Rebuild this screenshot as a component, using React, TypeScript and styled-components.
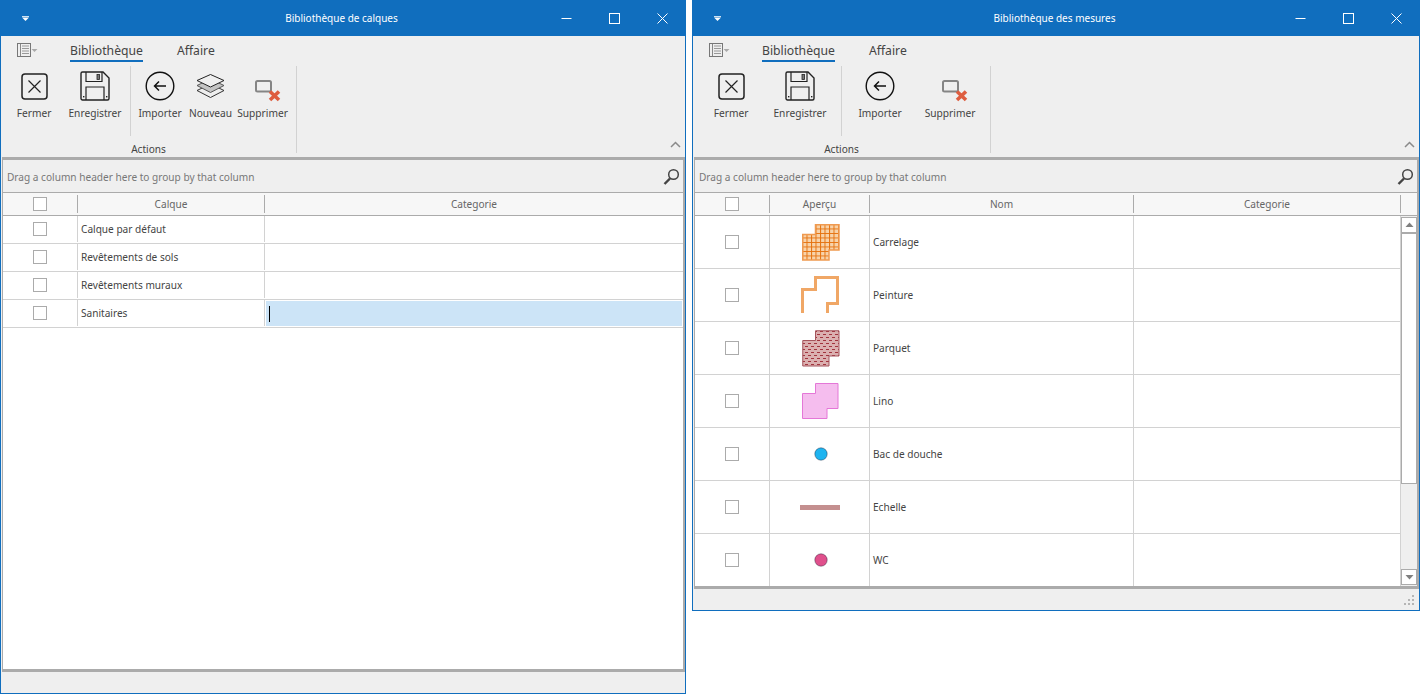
import React from 'react';
import styled, { createGlobalStyle } from 'styled-components';

const GlobalStyle = createGlobalStyle`
  html, body {
    margin: 0;
    padding: 0;
    background: #ffffff;
  }
  body {
    font-family: "Noto Sans", "Liberation Sans", sans-serif;
    font-size: 10.1px;
    color: #444444;
  }
`;

const Desktop = styled.div`
  display: flex;
  align-items: flex-start;
  gap: 6px;
  width: 1420px;
  height: 694px;
  overflow: hidden;
`;

const Window = styled.div<{ $width: number; $height: number }>`
  width: ${p => p.$width}px;
  height: ${p => p.$height}px;
  box-sizing: border-box;
  border: 1px solid #106ebe;
  border-top: 0;
  background: #efefef;
  display: flex;
  flex-direction: column;
  flex: none;
`;

const TitleBar = styled.div`
  height: 36px;
  flex: none;
  background: #106ebe;
  color: #ffffff;
  display: grid;
  grid-template-columns: 143px 1fr 146px;
  align-items: center;
`;

const TitleMenu = styled.div`
  padding-left: 21px;
  display: flex;
  align-items: center;
`;

const TitleText = styled.div`
  text-align: center;
  font-size: 10px;
`;

const TitleControls = styled.div`
  display: flex;
  justify-content: flex-end;
`;

const ControlButton = styled.div`
  width: 48px;
  height: 36px;
  box-sizing: border-box;
  padding-left: 2px;
  display: flex;
  align-items: center;
  justify-content: center;
`;

const Ribbon = styled.div`
  height: 121px;
  flex: none;
  position: relative;
`;

const TabRow = styled.div`
  height: 26px;
  display: flex;
  align-items: flex-start;
  padding-left: 16px;
`;

const AppMenu = styled.div`
  width: 53px;
  height: 22px;
  padding-top: 7px;
  box-sizing: border-box;
  display: flex;
  align-items: flex-start;
`;

const Tab = styled.div<{ $active?: boolean }>`
  height: 26px;
  box-sizing: border-box;
  margin-right: 34px;
  padding-top: 5px;
  font-size: 12.2px;
  line-height: 19px;
  color: #444444;
  border-bottom: 2px solid ${p => (p.$active ? '#106ebe' : 'transparent')};
`;

const GroupRow = styled.div`
  display: flex;
  margin-top: 4px;
  height: 87px;
`;

const Group = styled.div`
  display: flex;
  flex-direction: column;
  border-right: 1px solid #d2d2d2;
`;

const GroupBody = styled.div`
  display: flex;
  height: 70px;
`;

const GroupLabel = styled.div`
  height: 17px;
  line-height: 27px;
  text-align: center;
  font-size: 10.1px;
  color: #444444;
`;

const Section = styled.div<{ $pad: number; $line?: boolean }>`
  display: flex;
  padding-right: ${p => p.$pad}px;
  border-right: ${p => (p.$line ? '1px solid #d2d2d2' : '0')};
`;

const RibbonButton = styled.div<{ $width: number }>`
  width: ${p => p.$width}px;
  display: flex;
  flex-direction: column;
  align-items: center;
  padding-top: 4px;
`;

const IconSlot = styled.div`
  height: 32px;
  width: 32px;
  display: flex;
  align-items: center;
  justify-content: center;
`;

const ButtonLabel = styled.div`
  margin-top: 3px;
  font-size: 10.2px;
  line-height: 16px;
  white-space: nowrap;
  color: #444444;
`;

const Collapse = styled.div`
  position: absolute;
  right: 4px;
  bottom: 9px;
  line-height: 0;
`;

const Frame = styled.div`
  flex: 1;
  min-height: 0;
  margin-left: 1px;
  border-style: solid;
  border-color: #ababab;
  border-width: 3px 2px 3px 1px;
  display: flex;
  flex-direction: column;
`;

const GroupBar = styled.div`
  height: 33px;
  flex: none;
  box-sizing: border-box;
  border-bottom: 1px solid #ababab;
  padding: 0 3px 0 4px;
  display: flex;
  align-items: center;
  justify-content: space-between;
  color: #777777;
  font-size: 10.1px;
`;

const GroupHint = styled.span`
  padding-top: 2px;
`;

const HeaderRow = styled.div<{ $columns: string }>`
  height: 23px;
  flex: none;
  box-sizing: border-box;
  background: #f7f7f7;
  border-bottom: 1px solid #ababab;
  display: grid;
  grid-template-columns: ${p => p.$columns};
  align-items: center;
`;

const HeaderCell = styled.div<{ $line?: boolean }>`
  height: 18px;
  line-height: 18px;
  box-sizing: border-box;
  display: flex;
  align-items: center;
  justify-content: center;
  color: #666666;
  font-size: 10.1px;
  border-right: ${p => (p.$line ? '1px solid #ababab' : '0')};
`;

const GridBody = styled.div`
  flex: 1;
  min-height: 0;
  display: flex;
  background: #ffffff;
`;

const Rows = styled.div`
  flex: 1;
  min-width: 0;
  overflow: hidden;
`;

const Row = styled.div<{ $columns: string; $height: number; $compact?: boolean }>`
  height: ${p => p.$height}px;
  box-sizing: border-box;
  border-bottom: 1px solid #d2d2d2;
  padding-bottom: ${p => (p.$compact ? 1 : 0)}px;
  display: grid;
  grid-template-columns: ${p => p.$columns};
`;

const Cell = styled.div<{ $line?: boolean; $center?: boolean }>`
  box-sizing: border-box;
  display: flex;
  align-items: center;
  justify-content: ${p => (p.$center ? 'center' : 'flex-start')};
  padding-left: ${p => (p.$center ? 0 : 3)}px;
  font-size: 10.1px;
  color: #444444;
  border-right: ${p => (p.$line ? '1px solid #d2d2d2' : '0')};
  min-width: 0;
`;

const SwatchCell = styled(Cell)`
  padding-left: 2px;
`;

const EditCell = styled.div`
  margin: 1px 1px 0 1px;
  padding-left: 3px;
  background: #cce4f7;
  display: flex;
  align-items: center;
`;

const Caret = styled.div`
  width: 1px;
  height: 16px;
  background: #000000;
`;

const Check = styled.div`
  width: 14px;
  height: 14px;
  box-sizing: border-box;
  border: 1px solid #ababab;
  background: #ffffff;
`;

const ScrollBar = styled.div`
  width: 16px;
  flex: none;
  background: #efefef;
  display: flex;
  flex-direction: column;
  padding: 1px 0;
  box-sizing: border-box;
`;

const ScrollButton = styled.div`
  height: 16px;
  flex: none;
  box-sizing: border-box;
  border: 1px solid #ababab;
  background: #ffffff;
  display: flex;
  align-items: center;
  justify-content: center;
`;

const ScrollThumb = styled.div`
  height: 251px;
  flex: none;
  box-sizing: border-box;
  border: 1px solid #ababab;
  background: #ffffff;
`;

const ScrollSpace = styled.div`
  flex: 1;
`;

const StatusBar = styled.div`
  height: 21px;
  flex: none;
  box-sizing: border-box;
  display: flex;
  justify-content: flex-end;
  align-items: flex-end;
  padding: 0 4px 4px 0;
`;

const IconSvg = styled.svg`
  display: block;
  flex: none;
`;

const MenuArrow = () => (
  <IconSvg width="7" height="5" viewBox="0 0 7 5">
    <rect x="0" y="0" width="7" height="1" fill="#fff" opacity="0.8" />
    <path d="M0 1.5h7L3.5 5z" fill="#fff" />
  </IconSvg>
);

const MinimizeIcon = () => (
  <IconSvg width="11" height="11" viewBox="0 0 11 11">
    <path d="M.5 5.5h10" stroke="#fff" />
  </IconSvg>
);

const MaximizeIcon = () => (
  <IconSvg width="11" height="11" viewBox="0 0 11 11">
    <rect x="0.5" y="0.5" width="10" height="10" fill="none" stroke="#fff" />
  </IconSvg>
);

const CloseIcon = () => (
  <IconSvg width="11" height="11" viewBox="0 0 11 11">
    <path d="M.5.5l10 10M10.5.5l-10 10" stroke="#fff" />
  </IconSvg>
);

const AppMenuIcon = () => (
  <IconSvg width="21" height="15" viewBox="0 0 21 15">
    <rect x="0.5" y="0.5" width="13" height="13" fill="none" stroke="#777" />
    <path d="M3.5 1v12" stroke="#888" />
    <path d="M5 3h7M5 5.5h7M5 8h7M5 10.5h7" stroke="#999" />
    <path d="M14.5 6h6l-3 3z" fill="#aaa" />
  </IconSvg>
);

const CloseDocIcon = () => (
  <IconSvg width="27" height="27" viewBox="0 0 27 27">
    <rect x="1" y="1" width="25" height="25" rx="3" fill="none" stroke="#222" strokeWidth="1.5" />
    <path d="M7.5 7.5l12 12M19.5 7.5l-12 12" stroke="#222" strokeWidth="1.2" />
  </IconSvg>
);

const SaveIcon = () => (
  <IconSvg width="30" height="30" viewBox="0 0 30 30">
    <path d="M2.5 1h20.5L29 7v20.5a1.5 1.5 0 0 1-1.5 1.5h-25A1.5 1.5 0 0 1 1 27.5v-25A1.5 1.5 0 0 1 2.5 1z" fill="none" stroke="#222" strokeWidth="1.4" />
    <path d="M6 1v9.5h16V1" fill="none" stroke="#222" strokeWidth="1.2" />
    <rect x="17" y="3.5" width="2.5" height="5" fill="#777" stroke="#222" strokeWidth="0.8" />
    <path d="M6 29V16h18v13" fill="none" stroke="#222" strokeWidth="1.2" />
    <rect x="3" y="25" width="1.4" height="1.4" fill="#222" />
    <rect x="26" y="25" width="1.4" height="1.4" fill="#222" />
  </IconSvg>
);

const ImportIcon = () => (
  <IconSvg width="30" height="30" viewBox="0 0 30 30">
    <circle cx="15" cy="15" r="13.8" fill="none" stroke="#111" strokeWidth="1.4" />
    <path d="M21 15H10M14 10.5L9.5 15l4.5 4.5" fill="none" stroke="#111" strokeWidth="1.5" />
  </IconSvg>
);

const LayersIcon = () => (
  <IconSvg width="29" height="24" viewBox="0 0 29 24">
    <path d="M1 16.5L14.5 10 28 16.5 14.5 23.5z" fill="none" stroke="#333" />
    <path d="M1 11.5L14.5 5 28 11.5 14.5 18.5z" fill="#c4c4c4" stroke="#555" />
    <path d="M14.5 .5L28 6.5 14.5 13 1 6.5z" fill="#efefef" stroke="#222" />
  </IconSvg>
);

const DeleteIcon = () => (
  <IconSvg width="36" height="32" viewBox="0 0 36 32">
    <rect x="11" y="11" width="15" height="10.5" rx="1.5" fill="none" stroke="#858585" strokeWidth="2" />
    <path d="M25 21.5l9 8.5M34 21.5l-9 8.5" stroke="#de5d3f" strokeWidth="3.6" />
  </IconSvg>
);

const ChevronIcon = () => (
  <IconSvg width="11" height="7" viewBox="0 0 11 7">
    <path d="M1 6l4.5-4.5L10 6" fill="none" stroke="#8a8a8a" strokeWidth="1.5" />
  </IconSvg>
);

const SearchIcon = () => (
  <IconSvg width="17" height="17" viewBox="0 0 17 17">
    <circle cx="10.5" cy="6.5" r="4.8" fill="none" stroke="#444" strokeWidth="1.5" />
    <path d="M7 10.5L1.5 16" stroke="#444" strokeWidth="2.4" />
  </IconSvg>
);

const ArrowIcon = ({ up }: { up?: boolean }) => (
  <IconSvg width="9" height="6" viewBox="0 0 9 6">
    <path d={up ? 'M4.5 0.5L8.5 5h-8z' : 'M0.5 1h8l-4 4.5z'} fill="#808080" />
  </IconSvg>
);

const Grip = () => (
  <IconSvg width="12" height="12" viewBox="0 0 12 12">
    {[[9, 1], [5, 5], [9, 5], [1, 9], [5, 9], [9, 9]].map(([x, y]) => (
      <rect key={`${x}-${y}`} x={x} y={y} width="2" height="2" fill="#b5b5b5" />
    ))}
  </IconSvg>
);

const AREA = 'M13.5 .75H37V26H27V36H.75V10.5H13.5z';

const TileSwatch = () => (
  <IconSvg width="38" height="37" viewBox="0 0 38 37">
    <defs>
      <pattern id="tile" width="4.5" height="4.5" patternUnits="userSpaceOnUse">
        <rect width="4.5" height="4.5" fill="#f8d3aa" />
        <path d="M0 .5h4.5M.5 0v4.5" stroke="#e5720f" />
      </pattern>
    </defs>
    <path d={AREA} fill="url(#tile)" stroke="#ef9a50" strokeWidth="1.5" />
  </IconSvg>
);

const PaintSwatch = () => (
  <IconSvg width="39" height="38" viewBox="0 0 39 38">
    <path d="M1.5 37V13.5H14.5V1.5H36.5V27.5H26.5V37" fill="none" stroke="#f0a766" strokeWidth="3" />
  </IconSvg>
);

const ParquetSwatch = () => (
  <IconSvg width="38" height="37" viewBox="0 0 38 37">
    <defs>
      <pattern id="parquet" width="6" height="6" patternUnits="userSpaceOnUse">
        <rect width="6" height="6" fill="#dbb0b0" />
        <path d="M0 1.5h3M3 4.5h3" stroke="#a2343e" />
      </pattern>
    </defs>
    <path d={AREA} fill="url(#parquet)" stroke="#a5555c" />
  </IconSvg>
);

const LinoSwatch = () => (
  <IconSvg width="38" height="37" viewBox="0 0 38 37">
    <path d="M13.5 .5H36V25.5H25V35.5H.5V10.5H13.5z" fill="#f5bdee" stroke="#e477d7" />
  </IconSvg>
);

const DotSwatch = ({ color }: { color: string }) => (
  <IconSvg width="14" height="14" viewBox="0 0 14 14">
    <circle cx="7" cy="7" r="6.2" fill={color} stroke="rgba(40,40,60,0.55)" strokeWidth="0.8" />
  </IconSvg>
);

const LineSwatch = () => (
  <IconSvg width="42" height="5" viewBox="0 0 42 5">
    <rect width="40" height="5" fill="#c48f8f" />
  </IconSvg>
);

type RibbonItem = { label: string; icon: React.ReactNode; width: number };

const SearchGroupBar = () => (
  <GroupBar>
    <GroupHint>Drag a column header here to group by that column</GroupHint>
    <SearchIcon />
  </GroupBar>
);

const Shell = ({
  title,
  width,
  height,
  first,
  second,
  firstPad,
  secondPad,
  children,
  grip,
}: {
  title: string;
  width: number;
  height: number;
  first: RibbonItem[];
  second: RibbonItem[];
  firstPad: number;
  secondPad: number;
  children: React.ReactNode;
  grip?: boolean;
}) => (
  <Window $width={width} $height={height}>
    <TitleBar>
      <TitleMenu>
        <MenuArrow />
      </TitleMenu>
      <TitleText>{title}</TitleText>
      <TitleControls>
        <ControlButton><MinimizeIcon /></ControlButton>
        <ControlButton><MaximizeIcon /></ControlButton>
        <ControlButton><CloseIcon /></ControlButton>
      </TitleControls>
    </TitleBar>
    <Ribbon>
      <TabRow>
        <AppMenu><AppMenuIcon /></AppMenu>
        <Tab $active>Bibliothèque</Tab>
        <Tab>Affaire</Tab>
      </TabRow>
      <GroupRow>
        <Group>
          <GroupBody>
            <Section $pad={firstPad} $line>
              {first.map(item => (
                <RibbonButton key={item.label} $width={item.width}>
                  <IconSlot>{item.icon}</IconSlot>
                  <ButtonLabel>{item.label}</ButtonLabel>
                </RibbonButton>
              ))}
            </Section>
            <Section $pad={secondPad}>
              {second.map(item => (
                <RibbonButton key={item.label} $width={item.width}>
                  <IconSlot>{item.icon}</IconSlot>
                  <ButtonLabel>{item.label}</ButtonLabel>
                </RibbonButton>
              ))}
            </Section>
          </GroupBody>
          <GroupLabel>Actions</GroupLabel>
        </Group>
      </GroupRow>
      <Collapse><ChevronIcon /></Collapse>
    </Ribbon>
    <Frame>{children}</Frame>
    <StatusBar>{grip && <Grip />}</StatusBar>
  </Window>
);

const layerColumns = '75px 187px 1fr';
const layers = ['Calque par défaut', 'Revêtements de sols', 'Revêtements muraux', 'Sanitaires'];

const measureColumns = '75px 100px 264px 267px 16px';
const measureRowColumns = '75px 100px 264px 267px';
const measures: { name: string; swatch: React.ReactNode }[] = [
  { name: 'Carrelage', swatch: <TileSwatch /> },
  { name: 'Peinture', swatch: <PaintSwatch /> },
  { name: 'Parquet', swatch: <ParquetSwatch /> },
  { name: 'Lino', swatch: <LinoSwatch /> },
  { name: 'Bac de douche', swatch: <DotSwatch color="#1eb4f0" /> },
  { name: 'Echelle', swatch: <LineSwatch /> },
  { name: 'WC', swatch: <DotSwatch color="#e0508c" /> },
];

const App: React.FC = () => (
  <>
    <GlobalStyle />
    <Desktop>
      <Shell
        title="Bibliothèque de calques"
        width={686}
        height={694}
        firstPad={7}
        secondPad={3}
        first={[
          { label: 'Fermer', icon: <CloseDocIcon />, width: 66 },
          { label: 'Enregistrer', icon: <SaveIcon />, width: 56 },
        ]}
        second={[
          { label: 'Importer', icon: <ImportIcon />, width: 58 },
          { label: 'Nouveau', icon: <LayersIcon />, width: 43 },
          { label: 'Supprimer', icon: <DeleteIcon />, width: 61 },
        ]}
      >
        <SearchGroupBar />
        <HeaderRow $columns={layerColumns}>
          <HeaderCell $line><Check /></HeaderCell>
          <HeaderCell $line>Calque</HeaderCell>
          <HeaderCell>Categorie</HeaderCell>
        </HeaderRow>
        <GridBody>
          <Rows>
            {layers.map((name, i) => (
              <Row key={name} $columns={layerColumns} $height={28} $compact>
                <Cell $center $line><Check /></Cell>
                <Cell $line>{name}</Cell>
                {i === layers.length - 1 ? (
                  <EditCell><Caret /></EditCell>
                ) : (
                  <Cell />
                )}
              </Row>
            ))}
          </Rows>
        </GridBody>
      </Shell>
      <Shell
        title="Bibliothèque des mesures"
        width={728}
        height={611}
        firstPad={10}
        secondPad={8}
        grip
        first={[
          { label: 'Fermer', icon: <CloseDocIcon />, width: 76 },
          { label: 'Enregistrer', icon: <SaveIcon />, width: 62 },
        ]}
        second={[
          { label: 'Importer', icon: <ImportIcon />, width: 76 },
          { label: 'Supprimer', icon: <DeleteIcon />, width: 64 },
        ]}
      >
        <SearchGroupBar />
        <HeaderRow $columns={measureColumns}>
          <HeaderCell $line><Check /></HeaderCell>
          <HeaderCell $line>Aperçu</HeaderCell>
          <HeaderCell $line>Nom</HeaderCell>
          <HeaderCell $line>Categorie</HeaderCell>
          <HeaderCell />
        </HeaderRow>
        <GridBody>
          <Rows>
            {measures.map(m => (
              <Row key={m.name} $columns={measureRowColumns} $height={53}>
                <Cell $center $line><Check /></Cell>
                <SwatchCell $center $line>{m.swatch}</SwatchCell>
                <Cell $line>{m.name}</Cell>
                <Cell $line />
              </Row>
            ))}
          </Rows>
          <ScrollBar>
            <ScrollButton><ArrowIcon up /></ScrollButton>
            <ScrollThumb />
            <ScrollSpace />
            <ScrollButton><ArrowIcon /></ScrollButton>
          </ScrollBar>
        </GridBody>
      </Shell>
    </Desktop>
  </>
);

export default App;
